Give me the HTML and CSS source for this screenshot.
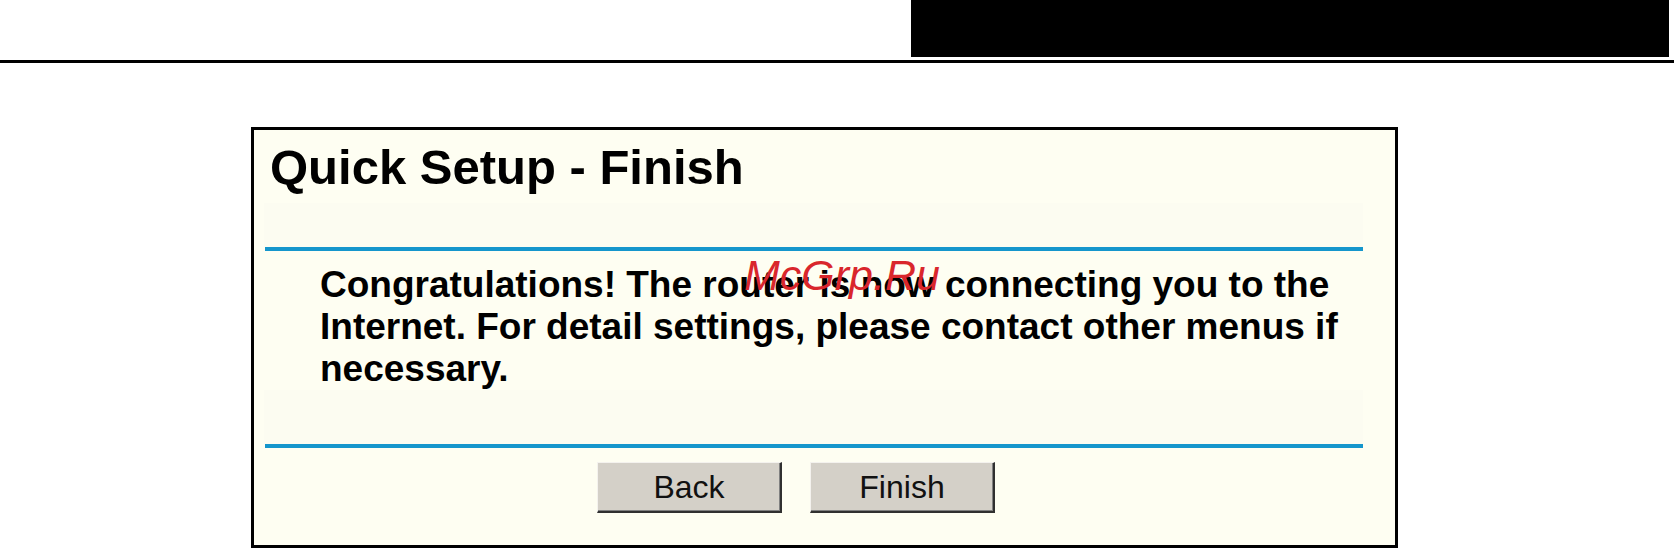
FILE: index.html
```html
<!DOCTYPE html>
<html lang="en">
<head>
    <meta charset="UTF-8">
    <title>Quick Setup - Finish</title>
    <link rel="stylesheet" href="styles.css">
</head>
<body>
    <div class="header">
        <div class="header-block"></div>
    </div>
    <div class="header-rule"></div>

    <div class="panel">
        <h1 class="title">Quick Setup - Finish</h1>
        <div class="band"></div>
        <div class="divider"></div>
        <p class="message">Congratulations! The router is now connecting you to the Internet. For detail settings, please contact other menus if necessary.</p>
        <div class="band short"></div>
        <div class="divider"></div>
        <div class="buttons">
            <button type="button">Back</button>
            <button type="button">Finish</button>
        </div>
        <span class="watermark">McGrp.Ru</span>
    </div>
</body>
</html>
```

FILE: styles.css
```css
body {
    margin: 0;
    background: #fff;
    font-family: "Liberation Sans", Arial, sans-serif;
    height: 548px;
    overflow: hidden;
}
.header {
    display: flex;
    justify-content: flex-end;
    padding-right: 5px;
}
.header-block {
    width: 758px;
    height: 57px;
    background: #000;
}
.header-rule {
    margin-top: 3px;
    height: 3px;
    background: #000;
}
.panel {
    position: relative;
    box-sizing: border-box;
    width: 1147px;
    height: 421px;
    margin: 64px 0 0 251px;
    border: 3px solid #000;
    background: #fefef2;
}
.title {
    margin: 9px 0 0 16px;
    font-size: 49px;
    line-height: 56px;
    font-weight: bold;
    color: #000;
}
.band {
    margin: 8px 32px 0 10px;
    height: 44px;
    background: #fcfcf1;
}
.band.short {
    height: 54px;
    margin-top: 0;
}
.divider {
    margin: 0 32px 0 11px;
    height: 4px;
    background: #1596cc;
}
.message {
    margin: 13px 0 0 66px;
    max-width: 1030px;
    font-size: 37px;
    line-height: 42px;
    font-weight: bold;
    color: #000;
}
.buttons {
    display: flex;
    gap: 28px;
    margin: 14px 0 0 343px;
}
button {
    box-sizing: border-box;
    width: 185px;
    height: 51px;
    padding: 0;
    background: #d4d0c8;
    border-top: 1px solid #f4f2ee;
    border-left: 1px solid #f4f2ee;
    border-right: 2px solid #303030;
    border-bottom: 2px solid #303030;
    box-shadow: inset -1px -1px 0 #808080;
    font-family: "Liberation Sans", Arial, sans-serif;
    font-size: 32px;
    color: #111;
}
.watermark {
    position: absolute;
    left: 490px;
    top: 124px;
    font-size: 43px;
    line-height: 1;
    font-style: italic;
    color: #d9262c;
    font-family: "Liberation Sans", Arial, sans-serif;
}
```
